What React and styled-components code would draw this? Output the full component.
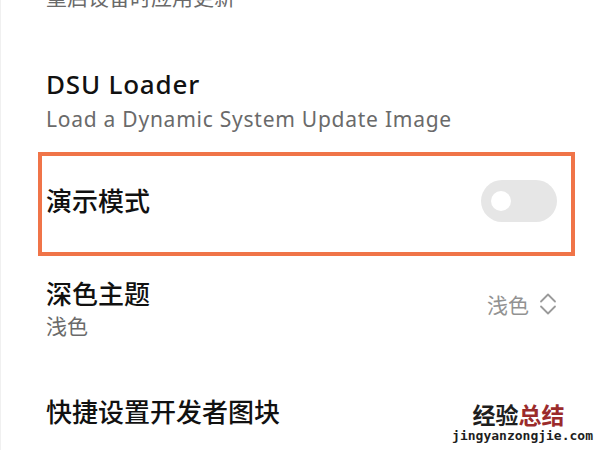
import styled, { createGlobalStyle } from "styled-components";

const GlobalStyle = createGlobalStyle`
  html, body {
    margin: 0;
    padding: 0;
    background: #ffffff;
  }
  body {
    width: 600px;
    height: 450px;
    overflow: hidden;
    font-family: "Noto Sans", "Noto Sans CJK SC", sans-serif;
  }
`;

const Screen = styled.div`
  position: relative;
  width: 600px;
  height: 450px;
  overflow: hidden;
  background: #fff;
  border-left: 1px solid #f0f0f0;
  box-sizing: border-box;
`;

const List = styled.div`
  display: flex;
  flex-direction: column;
  padding: 0 42px 0 45px;
`;

const TopRow = styled.div`
  height: 48px;
  display: flex;
  align-items: flex-end;
  padding-bottom: 38px;
  box-sizing: border-box;
`;

const Row = styled.div`
  height: 104px;
  display: flex;
  align-items: center;
  justify-content: space-between;
  box-sizing: border-box;
`;

const Highlight = styled(Row)`
  border: 4px solid #f07448;
  margin: 0 -17px 0 -8px;
  padding: 0 14px 6px 4px;
`;

const TextBlock = styled.div`
  display: flex;
  flex-direction: column;
  gap: ${({ $gap }) => $gap ?? 6}px;
`;

const Title = styled.div`
  font-size: 26px;
  line-height: 32px;
  font-weight: 500;
  color: #111;
  white-space: nowrap;
  letter-spacing: ${({ $latin }) => ($latin ? "0.8px" : "0")};
`;

const Subtitle = styled.div`
  font-size: 21px;
  line-height: 26px;
  color: #6a6a6a;
  white-space: nowrap;
  letter-spacing: ${({ $latin }) => ($latin ? "0.75px" : "0")};
`;

const Toggle = styled.div`
  width: 76px;
  height: 42px;
  border-radius: 21px;
  background: #e6e6e6;
  display: flex;
  align-items: center;
  padding-left: 10px;
  box-sizing: border-box;
`;

const Knob = styled.div`
  width: 20px;
  height: 20px;
  border-radius: 50%;
  background: #fff;
`;

const Value = styled.div`
  display: flex;
  align-items: center;
  gap: 10px;
  font-size: 21px;
  color: #929292;
  margin-top: -8px;
  margin-right: 1px;
`;

const Watermark = styled.div`
  position: absolute;
  right: 7px;
  bottom: 7px;
  display: flex;
  flex-direction: column;
  align-items: center;
  gap: 1px;
`;

const MarkTitle = styled.div`
  font-family: "Noto Sans CJK SC", sans-serif;
  font-size: 23px;
  line-height: 26px;
  font-weight: 700;
  color: #1e1e1e;
  margin-right: 8px;
`;

const Red = styled.span`
  color: #9b2b2b;
`;

const MarkUrl = styled.div`
  font-family: "DejaVu Sans Mono", monospace;
  font-size: 13px;
  line-height: 15px;
  font-weight: 700;
  color: #1e1e1e;
`;

const UpDown = () => (
  <svg width="18" height="26" viewBox="0 0 18 26" fill="none" stroke="#9a9a9a" strokeWidth="1.8" strokeLinecap="round" strokeLinejoin="round">
    <polyline points="2,10.5 9,3.5 16,10.5" />
    <polyline points="2,15.5 9,22.5 16,15.5" />
  </svg>
);

export default function App() {
  return (
    <Screen>
      <GlobalStyle />
      <List>
        <TopRow>
          <Subtitle>重启设备时应用更新</Subtitle>
        </TopRow>
        <Row>
          <TextBlock>
            <Title $latin>DSU Loader</Title>
            <Subtitle $latin>Load a Dynamic System Update Image</Subtitle>
          </TextBlock>
        </Row>
        <Highlight>
          <Title>演示模式</Title>
          <Toggle>
            <Knob />
          </Toggle>
        </Highlight>
        <Row>
          <TextBlock $gap={3}>
            <Title>深色主题</Title>
            <Subtitle>浅色</Subtitle>
          </TextBlock>
          <Value>
            浅色
            <UpDown />
          </Value>
        </Row>
        <Row>
          <Title>快捷设置开发者图块</Title>
        </Row>
      </List>
      <Watermark>
        <MarkTitle>
          经验<Red>总结</Red>
        </MarkTitle>
        <MarkUrl>jingyanzongjie.com</MarkUrl>
      </Watermark>
    </Screen>
  );
}
